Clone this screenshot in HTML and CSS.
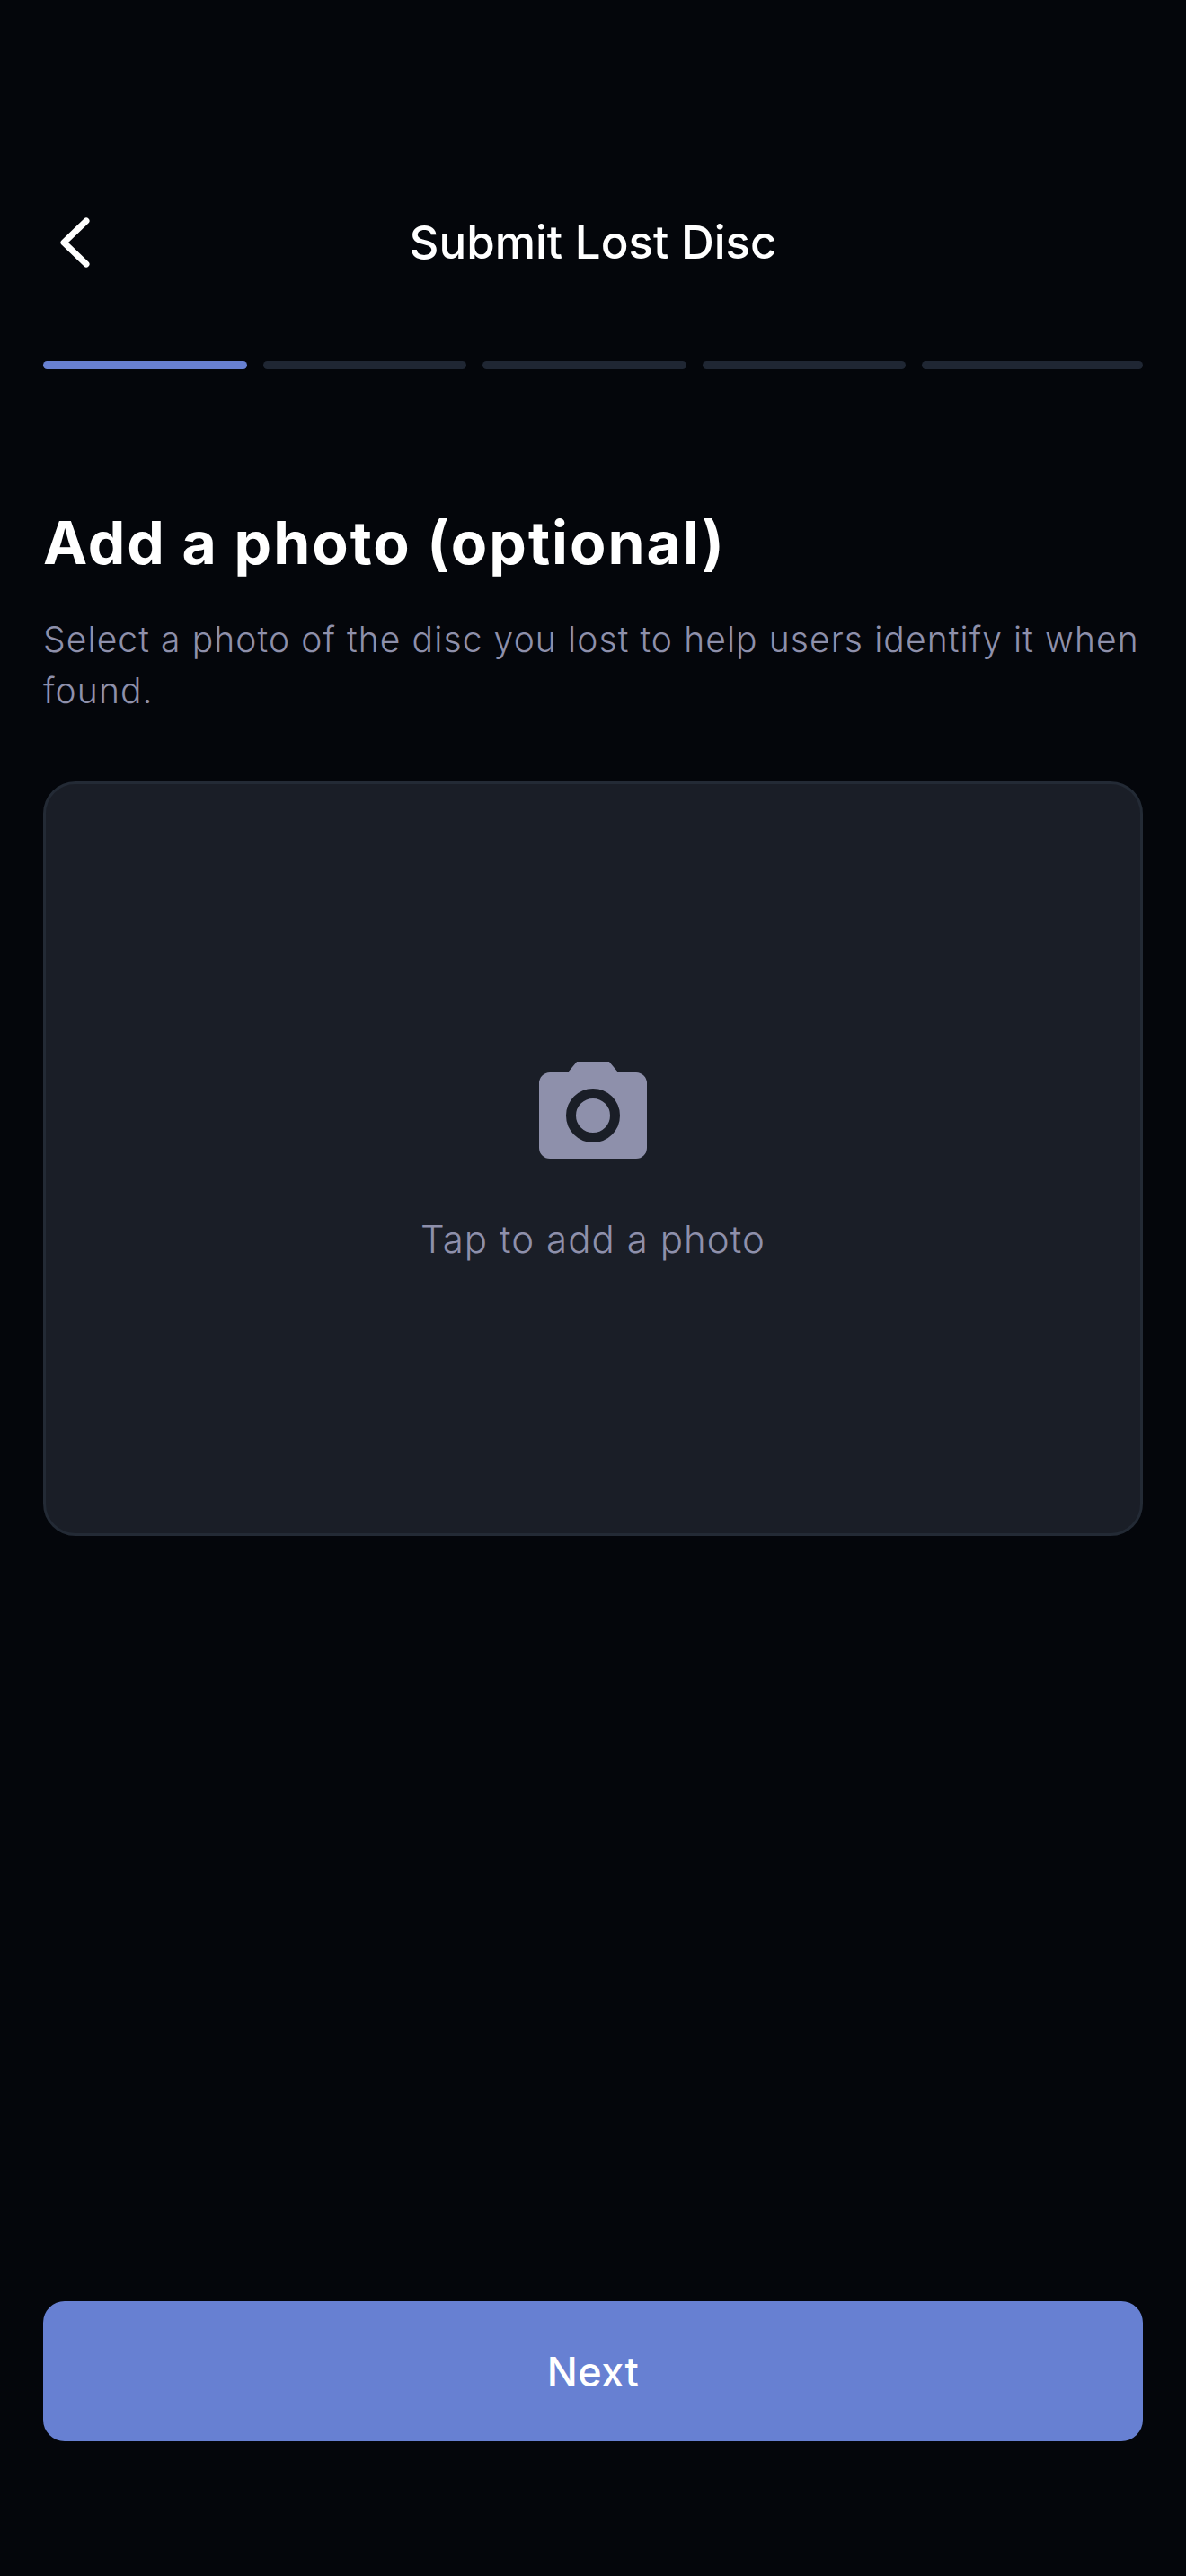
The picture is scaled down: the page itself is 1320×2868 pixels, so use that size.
FILE: index.html
```html
<!DOCTYPE html>
<html lang="en">
<head>
<meta charset="utf-8">
<title>Submit Lost Disc</title>
<link rel="stylesheet" href="styles.css">
</head>
<body>
<main class="screen">
  <header class="header">
    <button class="back" aria-label="Back">
      <svg class="back-icon" viewBox="0 0 60 72"><path d="M48 12 L23 36 L48 60" /></svg>
    </button>
    <h1 class="title">Submit Lost Disc</h1>
  </header>
  <div class="progress">
    <span class="step step-active"></span>
    <span class="step"></span>
    <span class="step"></span>
    <span class="step"></span>
    <span class="step step-last"></span>
  </div>
  <section class="intro">
    <h2 class="heading">Add a photo (optional)</h2>
    <p class="lead">Select a photo of the disc you lost to help users identify it when found.</p>
  </section>
  <button class="picker">
    <svg class="camera" viewBox="0 0 120 108">
      <path class="camera-body" d="M32 12 L42 0 H78 L88 12 H108 A12 12 0 0 1 120 24 V96 A12 12 0 0 1 108 108 H12 A12 12 0 0 1 0 96 V24 A12 12 0 0 1 12 12 Z" />
      <circle class="camera-ring" cx="60" cy="60" r="24.5" />
    </svg>
    <span class="picker-label">Tap to add a photo</span>
  </button>
  <div class="spacer"></div>
  <button class="next">Next</button>
</main>
</body>
</html>
```
FILE: styles.css
```css
* { box-sizing: border-box; }
html, body { margin: 0; padding: 0; background: #04060b; }
body { font-family: Inter, "Liberation Sans", sans-serif; color: #fff; }
button { font-family: inherit; border: 0; background: none; color: inherit; padding: 0; margin: 0; }
.screen {
  display: flex;
  flex-direction: column;
  width: 1320px;
  height: 2868px;
  padding: 234px 48px 150px;
}
.header {
  position: relative;
  display: flex;
  justify-content: center;
  align-items: center;
  height: 72px;
}
.back {
  position: absolute;
  left: 0;
  top: 0;
  width: 60px;
  height: 72px;
}
.back-icon { display: block; width: 60px; height: 72px; fill: none; stroke: #fff; stroke-width: 7; stroke-linecap: round; stroke-linejoin: round; }
.title { margin: 0; font-size: 51px; line-height: 72px; font-weight: 500; letter-spacing: 0; }
.progress { display: flex; gap: 18px; margin-top: 96px; }
.step { flex: 0 0 226.5px; height: 9px; border-radius: 5px; background: #1f2633; }
.step-active { background: #6780d2; }
.step-last { flex: 1 1 auto; }
.intro { margin-top: 151px; }
.heading { margin: 0; font-size: 66px; line-height: 84px; font-weight: 700; letter-spacing: 2px; }
.lead { margin: 37px 0 0; font-size: 39px; line-height: 57px; font-weight: 300; color: #8e90ab; letter-spacing: 1.1px; }
.picker {
  display: flex;
  flex-direction: column;
  align-items: center;
  justify-content: center;
  flex: 0 0 840px;
  margin-top: 73px;
  padding-top: 9px;
  border: 3px solid #232a35;
  border-radius: 36px;
  background: #1a1e27;
}
.camera { display: block; width: 120px; height: 108px; }
.camera-body { fill: #8e90ab; }
.camera-ring { fill: none; stroke: #1a1e27; stroke-width: 11; }
.picker-label { margin-top: 62px; font-size: 42px; line-height: 56px; font-weight: 300; color: #8e90ab; letter-spacing: 1.05px; }
.spacer { flex: 1 1 auto; }
.next {
  flex: 0 0 156px;
  border-radius: 24px;
  background: #6780d2;
  color: #fff;
  font-size: 45px;
  font-weight: 500;
  letter-spacing: 0.5px;
}
```
